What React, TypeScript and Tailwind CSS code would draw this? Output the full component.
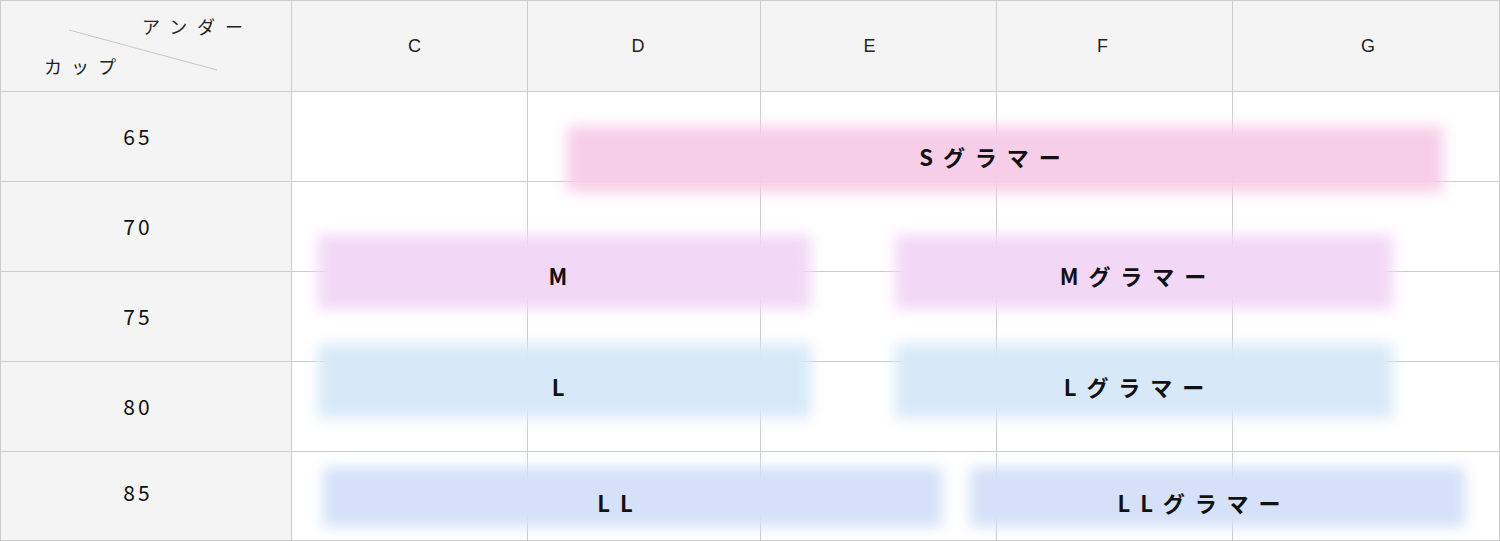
const CUPS = [
  { c: "C", cls: "pl-[10px]" },
  { c: "D", cls: "pr-[12px]" },
  { c: "E", cls: "pr-[18px]" },
  { c: "F", cls: "pr-[24px]" },
  { c: "G", cls: "pl-[4px]" },
];
const UNDERS = ["65", "70", "75", "80", "85"];

// colored size bands laid over the grid
const BARS = [
  { box: "left-[567px] top-[126px] w-[876px] h-[66px] bg-[#f7cee8]", label: "Sグラマー", pos: "left-[990px] top-[156px]" },
  { box: "left-[318px] top-[235px] w-[493px] h-[74px] bg-[#f2d8f6]", label: "M", pos: "left-[558px] top-[275px]" },
  { box: "left-[895px] top-[235px] w-[498px] h-[74px] bg-[#f2d8f6]", label: "Mグラマー", pos: "left-[1133px] top-[275px]" },
  { box: "left-[318px] top-[344px] w-[493px] h-[74px] bg-[#d7e9f8]", label: "L", pos: "left-[558px] top-[386px]" },
  { box: "left-[895px] top-[344px] w-[498px] h-[74px] bg-[#d7e9f8]", label: "Lグラマー", pos: "left-[1134px] top-[386px]" },
  { box: "left-[323px] top-[467px] w-[619px] h-[60px] bg-[#d5e1f8]", label: "LL", pos: "left-[615px] top-[502px]" },
  { box: "left-[970px] top-[467px] w-[495px] h-[60px] bg-[#d5e1f8]", label: "LLグラマー", pos: "left-[1199px] top-[502px]" },
];

export default function App() {
  return (
    <div className="relative w-[1500px] h-[541px] overflow-hidden bg-white font-['Noto_Sans_CJK_JP','Noto_Sans',sans-serif] text-[#111]">
      {/* Grid */}
      <div className="grid grid-cols-[291px_236px_233px_236px_236px_267px] grid-rows-[91px_90px_90px_90px_90px_89px] border-l border-t border-[#cccccc]">
        {/* Corner cell */}
        <div className="relative bg-[#f4f4f4] border-r border-b border-[#cccccc]">
          <svg className="absolute left-0 top-0" width="292" height="91">
            <line x1="68" y1="29" x2="216" y2="69" stroke="#c8c8c8" strokeWidth="1" />
          </svg>
          <span className="absolute left-[141px] top-[11px] text-[18px] leading-[28px] tracking-[0.55em] text-[#222]">
            アンダー
          </span>
          <span className="absolute left-[43px] top-[51px] text-[18px] leading-[28px] tracking-[0.5em] text-[#222]">
            カップ
          </span>
        </div>
        {CUPS.map(({ c, cls }) => (
          <div
            key={c}
            className={`flex items-center justify-center bg-[#f4f4f4] border-r border-b border-[#cccccc] text-[18px] text-[#222] font-['Liberation_Sans',sans-serif] ${cls}`}
          >
            {c}
          </div>
        ))}

        {UNDERS.map((u, i) => (
          <>
            <div
              key={u}
              className={`flex justify-center bg-[#f4f4f4] border-r border-b border-[#cccccc] text-[21px] tracking-[0.15em] pr-[16px] ${
                i === 4 ? "items-start pt-[25px]" : "items-center"
              }`}
            >
              {u}
            </div>
            {CUPS.map(({ c }) => (
              <div key={u + c} className="border-r border-b border-[#cccccc] bg-white" />
            ))}
          </>
        ))}
      </div>

      {/* Bands */}
      {BARS.map((b) => (
        <div key={b.label + "-bg"} className={`absolute blur-[7px] ${b.box}`} />
      ))}
      {BARS.map((b) => (
        <span
          key={b.label}
          className={`absolute -translate-x-1/2 -translate-y-1/2 whitespace-nowrap pl-[0.45em] text-[22px] leading-none font-bold tracking-[0.45em] text-[#111] ${b.pos}`}
        >
          {b.label}
        </span>
      ))}
    </div>
  );
}
